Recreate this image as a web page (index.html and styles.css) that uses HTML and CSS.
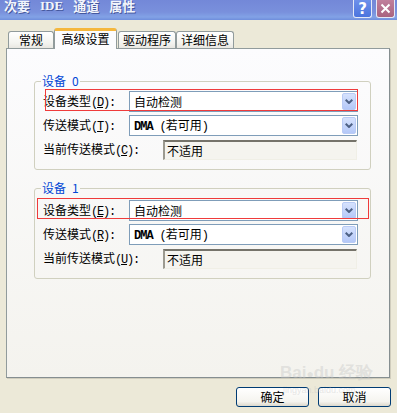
FILE: index.html
```html
<!DOCTYPE HTML>
<html>
<head>
<meta charset="utf-8">
<title>次要 IDE 通道 属性</title>
<link rel="stylesheet" href="styles.css">
</head>
<body>
<div class="titlebar">
	<div class="title"><span>次要</span><span class="latin">IDE</span><span>通道</span><span>属性</span></div>
	<div class="caption-btns">
		<div class="cbtn help">?</div>
		<div class="cbtn close">
			<svg width="11" height="11" viewBox="0 0 11 11"><path d="M1.5 1.5 L9.5 9.5 M9.5 1.5 L1.5 9.5" stroke="#fff" stroke-width="2" fill="none"/></svg>
		</div>
	</div>
</div>

<div class="tabs">
	<div class="tab tab-a">常规</div>
	<div class="tab tab-sel">高级设置</div>
	<div class="tab tab-b">驱动程序</div>
	<div class="tab tab-c">详细信息</div>
</div>

<div class="panel">
	<fieldset class="group g0">
		<legend>设备<span class="num">0</span></legend>
		<div class="row">
			<div class="lbl">设备类型<span class="m">(<u>D</u>):</span></div>
			<div class="combo"><span>自动检测</span><div class="drop"><svg width="8" height="5" viewBox="0 0 8 5"><path d="M0.7 0.7 L4 4 L7.3 0.7" stroke="#4d6185" stroke-width="2" fill="none"/></svg></div></div>
		</div>
		<div class="row">
			<div class="lbl">传送模式<span class="m">(<u>T</u>):</span></div>
			<div class="combo"><span><span class="m dma">DMA</span><span class="m paren">(</span>若可用<span class="m">)</span></span><div class="drop"><svg width="8" height="5" viewBox="0 0 8 5"><path d="M0.7 0.7 L4 4 L7.3 0.7" stroke="#4d6185" stroke-width="2" fill="none"/></svg></div></div>
		</div>
		<div class="row">
			<div class="lbl lbl-wide">当前传送模式<span class="m">(<u>C</u>):</span></div>
			<div class="field">不适用</div>
		</div>
	</fieldset>

	<fieldset class="group g1">
		<legend>设备<span class="num">1</span></legend>
		<div class="row">
			<div class="lbl">设备类型<span class="m">(<u>E</u>):</span></div>
			<div class="combo"><span>自动检测</span><div class="drop"><svg width="8" height="5" viewBox="0 0 8 5"><path d="M0.7 0.7 L4 4 L7.3 0.7" stroke="#4d6185" stroke-width="2" fill="none"/></svg></div></div>
		</div>
		<div class="row">
			<div class="lbl">传送模式<span class="m">(<u>R</u>):</span></div>
			<div class="combo"><span><span class="m dma">DMA</span><span class="m paren">(</span>若可用<span class="m">)</span></span><div class="drop"><svg width="8" height="5" viewBox="0 0 8 5"><path d="M0.7 0.7 L4 4 L7.3 0.7" stroke="#4d6185" stroke-width="2" fill="none"/></svg></div></div>
		</div>
		<div class="row">
			<div class="lbl lbl-wide">当前传送模式<span class="m">(<u>U</u>):</span></div>
			<div class="field">不适用</div>
		</div>
	</fieldset>
</div>

<div class="buttons">
	<div class="btn">确定</div>
	<div class="btn">取消</div>
</div>

<!-- annotation boxes drawn over the dialog -->
<div class="mark mark1"></div>
<div class="mark mark2"></div>

<div class="watermark">
	<div class="wm-top">Bai<span class="paw">●</span>du 经验</div>
	<div class="wm-url">jingyan.baidu.com</div>
</div>
</body>
</html>
```

FILE: styles.css
```css
body{
	margin: 0;
	width: 397px;
	height: 413px;
	overflow: hidden;
	position: relative;
	background: #ECE9D8;
	font-family: "Noto Sans CJK SC", sans-serif;
	font-size: 12px;
	color: #000;
}
.m{
	font-family: "Liberation Mono", monospace;
	font-size: 12px;
	letter-spacing: -1.2px;
}
.dma{
	font-weight: bold;
	letter-spacing: -1px;
}
.paren{
	margin-left: 7px;
}

/* title bar */
.titlebar{
	height: 20px;
	display: flex;
	justify-content: space-between;
	align-items: flex-start;
	background: linear-gradient(#7388d8 0%, #7990dc 60%, #82a2e6 85%, #6f8edc 100%);
}
.title{
	display: flex;
	gap: 10px;
	margin: -2px 0 0 4px;
	font-size: 13px;
	line-height: 15px;
	font-weight: bold;
	color: #f2f5fc;
	text-shadow: 1px 1px 0 #45589e;
}
.title .latin{
	font-family: "Liberation Serif", serif;
}
.caption-btns{
	display: flex;
	gap: 4px;
	margin-right: 2px;
}
.cbtn{
	width: 19px;
	height: 18px;
	box-sizing: border-box;
	border: 1px solid #e4e9f7;
	border-top: none;
	border-radius: 0 0 3px 3px;
	display: flex;
	align-items: center;
	justify-content: center;
	color: #fff;
}
.help{
	background: linear-gradient(#6d90ea, #4b74de);
	font-family: "DejaVu Sans", sans-serif;
	font-size: 15px;
	font-weight: bold;
}
.close{
	background: linear-gradient(#c07f9c, #a9637f);
}

/* tabs */
.tabs{
	display: flex;
	align-items: flex-end;
	height: 20px;
	margin-top: 8px;
	padding-left: 8px;
}
.tab{
	height: 17px;
	box-sizing: border-box;
	border: 1px solid #919B9C;
	border-bottom: none;
	border-radius: 3px 3px 0 0;
	background: linear-gradient(#ffffff, #f3f3ef 70%, #e8e7e1);
	text-align: center;
	line-height: 16px;
}
.tab-a{ width: 46px; }
.tab-b{ width: 58px; margin-left: 1px; }
.tab-c{ width: 58px; }
.tab-sel{
	position: relative;
	z-index: 2;
	width: 63px;
	height: 21px;
	margin-bottom: -1px;
	border-top: 3px solid #F5B73E;
	background: #FCFCFE;
}

/* tab page */
.panel{
	width: 384px;
	height: 330px;
	box-sizing: border-box;
	margin-left: 6px;
	padding: 25px 18px 0 27px;
	border: 1px solid #919B9C;
	border-right-color: #858e90;
	border-bottom-color: #858e90;
	background: linear-gradient(#FCFCFE, #F4F3EE);
	box-shadow: 1px 1px 0 #d0cdbd;
}
.group{
	margin: 0;
	padding: 3px 12px 9px 8px;
	border: 1px solid #D0D0BF;
	border-radius: 3px;
}
.g1{
	margin-top: 11px;
	padding-top: 5px;
}
.group legend{
	height: 14px;
	padding: 0 1px;
	margin-left: -2px;
	line-height: 14px;
	color: #0046D5;
}
.num{
	margin-left: 6px;
}
.row{
	display: flex;
	align-items: center;
	height: 21px;
}
.row + .row{
	margin-top: 3px;
}
.lbl{
	flex: 0 0 86px;
	white-space: nowrap;
	line-height: 16px;
}
.lbl-wide{
	flex: 0 0 120px;
}
.combo{
	width: 229px;
	height: 21px;
	box-sizing: border-box;
	display: flex;
	align-items: center;
	justify-content: space-between;
	padding-left: 4px;
	border: 1px solid #7F9DB9;
	background: #fff;
	line-height: 16px;
}
.drop{
	width: 14px;
	height: 17px;
	margin-right: 1px;
	box-sizing: border-box;
	border: 1px solid #b9cbf5;
	border-radius: 2px;
	background: linear-gradient(#d6e2fd, #b4c8f8);
	display: flex;
	align-items: center;
	justify-content: center;
}
.field{
	width: 194px;
	height: 20px;
	box-sizing: border-box;
	padding-left: 2px;
	line-height: 17px;
	border-top: 2px solid #75736a;
	border-left: 2px solid #9c9a90;
	border-right: 1px solid #f0efe6;
	border-bottom: 1px solid #f0efe6;
	background: #F5F4EF;
}

/* dialog buttons */
.buttons{
	display: flex;
	justify-content: flex-end;
	gap: 9px;
	margin-top: 9px;
	padding-right: 6px;
}
.btn{
	width: 73px;
	height: 20px;
	box-sizing: border-box;
	border: 1px solid #003C74;
	border-radius: 3px;
	background: linear-gradient(#ffffff, #f5f4ef 75%, #dcd8cc);
	text-align: center;
	line-height: 18px;
}

/* red annotation marks */
.mark{
	position: absolute;
	border: 1px solid #ef3b3b;
}
.mark1{
	left: 45px;
	top: 89px;
	width: 311px;
	height: 20px;
}
.mark2{
	left: 37px;
	top: 198px;
	width: 330px;
	height: 19px;
}

/* faint watermark */
.watermark{
	position: absolute;
	left: 280px;
	top: 362px;
	color: rgba(195, 195, 195, 0.4);
	font-family: "Liberation Sans", sans-serif;
}
.wm-top{
	font-size: 17px;
	font-weight: bold;
	line-height: 22px;
}
.paw{
	font-size: 12px;
}
.wm-url{
	font-size: 9px;
	line-height: 10px;
	margin-left: 3px;
}
```
